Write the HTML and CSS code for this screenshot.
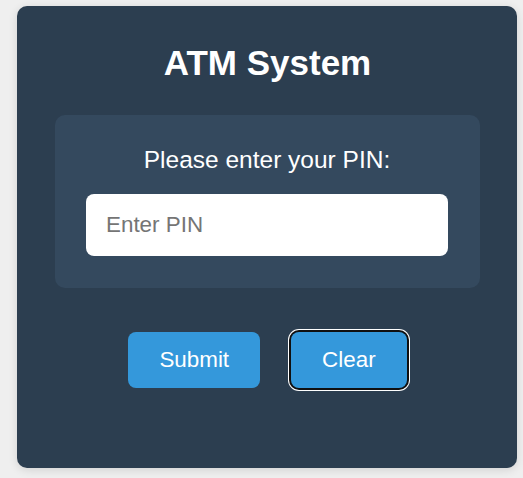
FILE: index.html
```html
<!DOCTYPE html>
<html lang="en">
<head>
<meta charset="utf-8">
<title>ATM System</title>
<link rel="stylesheet" href="styles.css">
</head>
<body>
  <main class="atm-card">
    <h1 class="atm-title">ATM System</h1>
    <section class="pin-panel">
      <label class="pin-label" for="pin">Please enter your PIN:</label>
      <input class="pin-input" id="pin" type="password" placeholder="Enter PIN">
    </section>
    <div class="actions">
      <button class="btn" type="button">Submit</button>
      <button class="btn btn-focused" type="button">Clear</button>
    </div>
  </main>
</body>
</html>
```
FILE: styles.css
```css
* { box-sizing: border-box; }

html, body {
  margin: 0;
  height: 100%;
}

body {
  background: #efefef;
  font-family: "Liberation Sans", Arial, sans-serif;
  padding: 6px 0 0 17px;
}

.atm-card {
  width: 500px;
  height: 462px;
  background: #2c3e50;
  border-radius: 10px;
  box-shadow: 0 2px 10px rgba(0, 0, 0, 0.12);
  padding: 37px 37px 0 38px;
  display: flex;
  flex-direction: column;
  color: #fff;
}

.atm-title {
  margin: 0 0 32px;
  font-size: 35px;
  font-weight: bold;
  text-align: center;
  line-height: normal;
}

.pin-panel {
  background: #34495e;
  border-radius: 10px;
  padding: 31px 32px 32px 31px;
  display: flex;
  flex-direction: column;
  align-items: stretch;
}

.pin-label {
  font-size: 24.5px;
  text-align: center;
  margin-bottom: 20px;
  line-height: 28px;
}

.pin-input {
  height: 62px;
  border: none;
  border-radius: 8px;
  background: #fff;
  padding: 0 20px;
  font-family: inherit;
  font-size: 22.4px;
  color: #333;
  outline: none;
}

.pin-input::placeholder {
  color: #757575;
}

.actions {
  margin-top: 44px;
  display: flex;
  justify-content: center;
  gap: 31px;
}

.btn {
  background: #3498db;
  color: #fff;
  border: none;
  border-radius: 8px;
  padding: 15px 31px;
  font-family: inherit;
  font-size: 22.4px;
  line-height: normal;
  cursor: pointer;
}

.btn-focused {
  box-shadow: 0 0 0 2px #101010, 0 0 0 3px #fff;
}
```
